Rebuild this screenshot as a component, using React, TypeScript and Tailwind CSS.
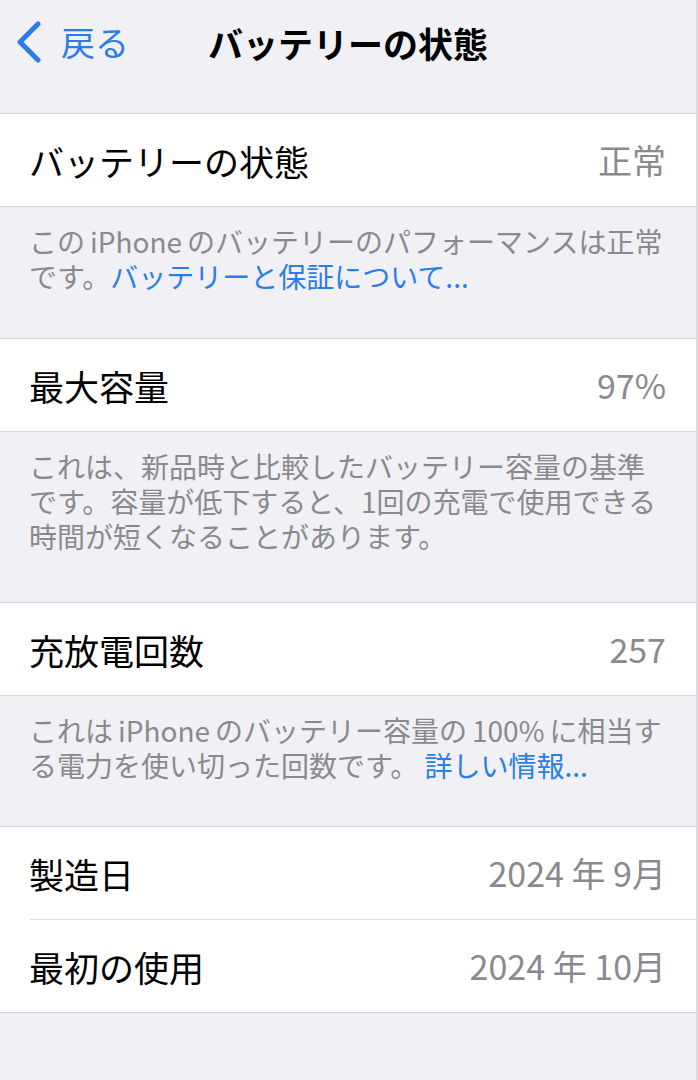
import React from "react";

const FONT = {
  fontFamily:
    '"Noto Sans CJK JP", "Noto Sans", sans-serif',
};

function Row({
  label,
  value,
}: {
  label: string;
  value: string;
}) {
  return (
    <div className="flex h-[92px] items-center justify-between pl-[29px] pr-[30px]">
      <span className="text-[35px] leading-none text-black">{label}</span>
      <span className="text-[34px] leading-none text-[#8a8a8e]">{value}</span>
    </div>
  );
}

function Footer({
  children,
  pb,
}: {
  children: React.ReactNode;
  pb: string;
}) {
  return (
    <div
      className={`whitespace-nowrap pl-[29px] pr-[30px] pt-[17px] text-[28px] leading-[35px] text-[#8a8a8e] ${pb}`}
    >
      {children}
    </div>
  );
}

function Link({ children }: { children: React.ReactNode }) {
  return <span className="text-[#2b7de9]">{children}</span>;
}

function Gap() {
  return <span className="inline-block w-[5px]" />;
}

export default function App() {
  return (
    <div
      className="min-h-[1080px] w-full border-r-2 border-[#dcdce0] bg-[#f0f0f5]"
      style={FONT}
    >
      {/* navigation bar */}
      <header className="grid h-[84px] grid-cols-[1fr_auto_1fr] items-center">
        <div className="flex items-center pl-[14px] text-[#2b7de9]">
          <svg width="28" height="42" viewBox="0 0 28 42" fill="none">
            <path
              d="M24 3 L6 21 L24 39"
              stroke="currentColor"
              strokeWidth="5"
              strokeLinecap="round"
              strokeLinejoin="round"
            />
          </svg>
          <span className="ml-[19px] text-[34px] leading-none">戻る</span>
        </div>
        <h1 className="text-[35px] font-bold leading-none text-black">
          バッテリーの状態
        </h1>
        <div />
      </header>

      <section className="mt-[29px] border-y border-[#d6d6da] bg-white">
        <Row label="バッテリーの状態" value="正常" />
      </section>
      <Footer pb="pb-[44px]">
        この<Gap />iPhone<Gap />のバッテリーのパフォーマンスは正常
        <br />
        です。<Link>バッテリーと保証について...</Link>
      </Footer>

      <section className="border-y border-[#d6d6da] bg-white">
        <Row label="最大容量" value="97%" />
      </section>
      <Footer pb="pb-[48px]">
        これは、新品時と比較したバッテリー容量の基準
        <br />
        です。容量が低下すると、1回の充電で使用できる
        <br />
        時間が短くなることがあります。
      </Footer>

      <section className="border-y border-[#d6d6da] bg-white">
        <Row label="充放電回数" value="257" />
      </section>
      <Footer pb="pb-[43px]">
        これは<Gap />iPhone<Gap />のバッテリー容量の<Gap />100%<Gap />に相当す
        <br />
        る電力を使い切った回数です。 <Link>詳しい情報...</Link>
      </Footer>

      <section className="border-y border-[#d6d6da] bg-white">
        <Row label="製造日" value="2024 年 9月" />
        <div className="ml-[30px] h-px bg-[#e0e0e4]" />
        <Row label="最初の使用" value="2024 年 10月" />
      </section>
    </div>
  );
}
